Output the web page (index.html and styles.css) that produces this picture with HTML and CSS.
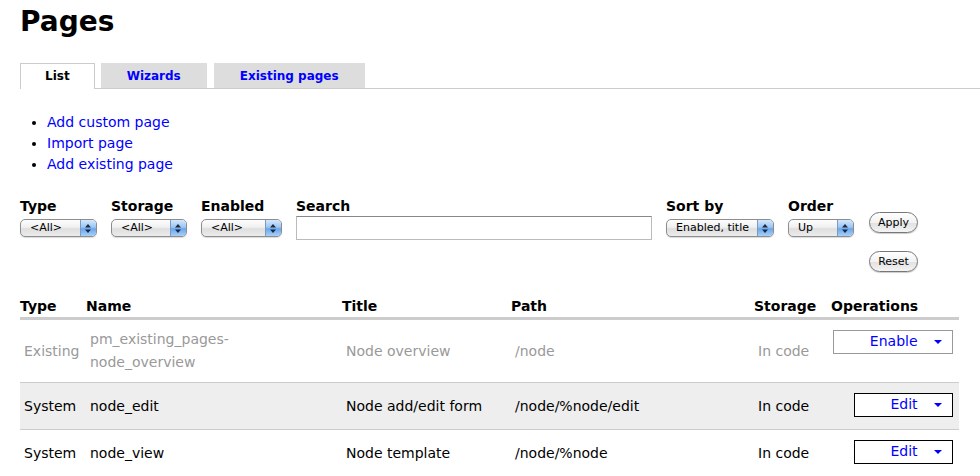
FILE: index.html
```html
<!DOCTYPE html>
<html lang="en">
  <head>
    <meta charset="UTF-8" />
    <title>Pages</title>
    <link rel="stylesheet" href="styles.css">
  </head>
  <body>
    <h1 class="page-title">Pages</h1>

    <ul class="tabs">
      <li class="tab active"><a href="#">List</a></li>
      <li class="tab"><a href="#">Wizards</a></li>
      <li class="tab"><a href="#">Existing pages</a></li>
    </ul>

    <ul class="actions">
      <li><a href="#">Add custom page</a></li>
      <li><a href="#">Import page</a></li>
      <li><a href="#">Add existing page</a></li>
    </ul>

    <form class="filters">
      <div class="filter">
        <label>Type</label>
        <span class="select w-type">
          <select><option>&lt;All&gt;</option></select>
          <svg class="updown" width="6" height="9" viewBox="0 0 6 9"><path d="M3 0L6 3.5H0Z M3 9L6 5.5H0Z" /></svg>
        </span>
      </div>
      <div class="filter">
        <label>Storage</label>
        <span class="select w-storage">
          <select><option>&lt;All&gt;</option></select>
          <svg class="updown" width="6" height="9" viewBox="0 0 6 9"><path d="M3 0L6 3.5H0Z M3 9L6 5.5H0Z" /></svg>
        </span>
      </div>
      <div class="filter">
        <label>Enabled</label>
        <span class="select w-enabled">
          <select><option>&lt;All&gt;</option></select>
          <svg class="updown" width="6" height="9" viewBox="0 0 6 9"><path d="M3 0L6 3.5H0Z M3 9L6 5.5H0Z" /></svg>
        </span>
      </div>
      <div class="filter">
        <label>Search</label>
        <input type="text" class="search" />
      </div>
      <div class="filter">
        <label>Sort by</label>
        <span class="select w-sort">
          <select><option>Enabled, title</option></select>
          <svg class="updown" width="6" height="9" viewBox="0 0 6 9"><path d="M3 0L6 3.5H0Z M3 9L6 5.5H0Z" /></svg>
        </span>
      </div>
      <div class="filter">
        <label>Order</label>
        <span class="select w-order">
          <select><option>Up</option></select>
          <svg class="updown" width="6" height="9" viewBox="0 0 6 9"><path d="M3 0L6 3.5H0Z M3 9L6 5.5H0Z" /></svg>
        </span>
      </div>
      <div class="filter buttons">
        <button type="button" class="pill">Apply</button>
        <button type="button" class="pill">Reset</button>
      </div>
    </form>

    <table class="pages">
      <colgroup>
        <col style="width: 66px" />
        <col style="width: 256px" />
        <col style="width: 169px" />
        <col style="width: 243px" />
        <col style="width: 77px" />
        <col style="width: 128px" />
      </colgroup>
      <thead>
        <tr>
          <th>Type</th>
          <th>Name</th>
          <th>Title</th>
          <th>Path</th>
          <th>Storage</th>
          <th>Operations</th>
        </tr>
      </thead>
      <tbody>
        <tr class="disabled">
          <td>Existing</td>
          <td>pm_existing_pages-<br />node_overview</td>
          <td>Node overview</td>
          <td>/node</td>
          <td>In code</td>
          <td class="ops">
            <a href="#" class="op-button wide">Enable <span class="caret"></span></a>
          </td>
        </tr>
        <tr class="even">
          <td>System</td>
          <td>node_edit</td>
          <td>Node add/edit form</td>
          <td>/node/%node/edit</td>
          <td>In code</td>
          <td class="ops">
            <a href="#" class="op-button">Edit <span class="caret"></span></a>
          </td>
        </tr>
        <tr>
          <td>System</td>
          <td>node_view</td>
          <td>Node template</td>
          <td>/node/%node</td>
          <td>In code</td>
          <td class="ops">
            <a href="#" class="op-button">Edit <span class="caret"></span></a>
          </td>
        </tr>
      </tbody>
    </table>
  </body>
</html>
```

FILE: styles.css
```css
body {
  font-family: "DejaVu Sans", Verdana, sans-serif;
  font-size: 13px;
  color: #000;
  background: #fff;
  margin: 0;
  padding: 0 21px 0 20px;
}

a {
  color: #0000ff;
  text-decoration: none;
}

.page-title {
  font-size: 28px;
  font-weight: bold;
  line-height: 34px;
  margin: 5px 0 0 0;
}

/* Tabs */
.tabs {
  list-style: none;
  margin: 24px -21px 0 0;
  padding: 0;
  display: flex;
  gap: 6px;
  border-bottom: 1px solid #ccc;
  height: 25px;
}

.tab a {
  display: block;
  height: 24px;
  line-height: 25px;
  background: #ddd;
  font-size: 12px;
  font-weight: bold;
  text-align: center;
  padding: 0 25px;
  border: 1px solid #ddd;
  border-bottom: none;
}

.tab:nth-child(3) {
  margin-left: 1px;
}

.tab.active a {
  background: #fff;
  color: #000;
  border-color: #ccc;
  height: 25px;
  padding: 0 24px;
}

/* Action links */
.actions {
  margin: 23px 0 0 0;
  padding-left: 27px;
  font-size: 14px;
  line-height: 21px;
}

/* Filter form */
.filters {
  display: flex;
  gap: 14px;
  margin-top: 22px;
}

.filter label {
  display: block;
  font-size: 14px;
  font-weight: bold;
  line-height: 18px;
  margin-bottom: 4px;
}

.select {
  position: relative;
  display: block;
  height: 18px;
}

.select select {
  appearance: none;
  -webkit-appearance: none;
  width: 100%;
  height: 18px;
  border: 1px solid #8d8d8d;
  border-radius: 5px;
  background: linear-gradient(#fdfdfd, #f0f0f0 45%, #dedede 55%, #ececec);
  font-family: "DejaVu Sans", Verdana, sans-serif;
  font-size: 11px;
  line-height: 16px;
  padding: 0 20px 0 9px;
  color: #000;
  box-shadow: 0 1px 1px rgba(0, 0, 0, 0.15);
}

.select::after {
  content: "";
  position: absolute;
  top: 1px;
  right: 1px;
  width: 15px;
  height: 16px;
  border-radius: 0 4px 4px 0;
  background: linear-gradient(#d4e8fb, #9cc6f3 45%, #6aa6ea 55%, #a7d0f8);
  border-left: 1px solid #7a9ac4;
}

.select .updown {
  position: absolute;
  top: 5px;
  right: 6px;
  z-index: 1;
  fill: #1c2a44;
}

.w-type { width: 77px; }
.w-storage { width: 76px; }
.w-enabled { width: 81px; }
.w-sort { width: 108px; }
.w-order { width: 66px; }

.search {
  display: block;
  box-sizing: border-box;
  width: 356px;
  height: 24px;
  margin-top: -3px;
  border: 1px solid #bbb;
  border-top-color: #888;
  font-family: "DejaVu Sans", Verdana, sans-serif;
}

.buttons {
  display: flex;
  flex-direction: column;
  align-items: flex-start;
  gap: 18px;
  padding-top: 15px;
  margin-left: 1px;
}

.pill {
  width: 49px;
  height: 21px;
  border: 1px solid #777;
  border-radius: 11px;
  background: linear-gradient(#fff, #f2f2f2 50%, #e2e2e2 55%, #f4f4f4);
  font-family: "DejaVu Sans", Verdana, sans-serif;
  font-size: 11px;
  color: #000;
  padding: 0;
  box-shadow: 0 1px 1px rgba(0, 0, 0, 0.2);
}

/* Pages table */
.pages {
  border-collapse: collapse;
  table-layout: fixed;
  width: 939px;
  margin-top: 23px;
}

.pages th {
  text-align: left;
  font-size: 14px;
  font-weight: bold;
  line-height: 18px;
  padding: 2px 0 2px 0;
  border-bottom: 3px solid #ccc;
  white-space: nowrap;
}

.pages td {
  padding: 8px 4px;
  line-height: 23px;
  font-size: 14px;
  border-bottom: 1px solid #ccc;
  vertical-align: middle;
}

.pages tr.even td {
  background: #eee;
}

.pages tr.disabled td {
  color: #999;
}

.pages td.ops {
  vertical-align: top;
  text-align: right;
  padding-left: 0;
  padding-right: 6px;
}

.op-button {
  display: inline-block;
  box-sizing: border-box;
  width: 99px;
  height: 24px;
  margin: 2px 0 4px 0;
  border: 1px solid #000;
  background: #fff;
  line-height: 21px;
  font-size: 14px;
  text-align: right;
  padding-right: 10px;
  vertical-align: top;
}

.op-button.wide {
  width: 120px;
}

.disabled .op-button {
  border-color: #999;
}

.caret {
  display: inline-block;
  width: 0;
  height: 0;
  margin-left: 12px;
  vertical-align: middle;
  border-left: 4px solid transparent;
  border-right: 4px solid transparent;
  border-top: 4px solid #0000ff;
}
```
